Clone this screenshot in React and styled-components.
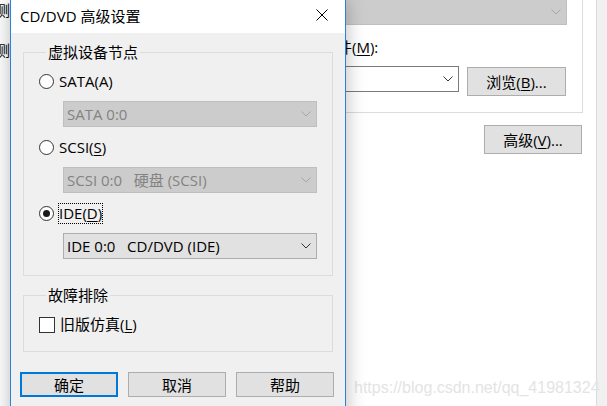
import React from 'react';
import styled, { createGlobalStyle } from 'styled-components';

const font = `"Open Sans", "Noto Sans CJK SC", sans-serif`;

const GlobalStyle = createGlobalStyle`
  html, body {
    margin: 0;
    padding: 0;
    background: #ffffff;
    overflow: hidden;
  }
`;

const Screen = styled.div`
  position: relative;
  width: 607px;
  height: 406px;
  display: flex;
  background: #ffffff;
  overflow: hidden;
  font-family: ${font};
  font-size: 15px;
  color: #000;
`;

const EdgeColumn = styled.div`
  width: 10px;
  flex-shrink: 0;
  display: flex;
  flex-direction: column;
  align-items: flex-end;
  overflow: hidden;
`;

const EdgeText = styled.div`
  line-height: 20px;
  white-space: nowrap;
  margin-top: ${p => p.$gap || 0}px;
`;

const Covered = styled.div`
  width: 335px;
  flex-shrink: 0;
`;

const ParentPane = styled.div`
  flex: 1;
  display: flex;
  flex-direction: column;
`;

const ConnectGroup = styled.div`
  height: 113px;
  box-sizing: border-box;
  margin-right: 13px;
  padding-right: 15px;
  border-right: 1px solid #dcdcdc;
  border-bottom: 1px solid #dcdcdc;
  display: flex;
  flex-direction: column;
`;

const FileLabel = styled.div`
  line-height: 20px;
  margin: 12px 0 0 -23px;
  white-space: nowrap;
`;

const FileRow = styled.div`
  display: flex;
  align-items: flex-start;
  gap: 8px;
  margin-top: 9px;
  margin-left: -10px;
`;

const SideStrip = styled.div`
  width: 10px;
  flex-shrink: 0;
  background: #f0f0f0;
  border-left: 1px solid #dcdcdc;
`;

const Key = styled.span`
  text-decoration: underline;
  text-underline-offset: 2px;
`;

const selectLook = {
  disabled: { bg: '#cccccc', border: '#bfbfbf', color: '#838383', arrow: '#a6a6a6' },
  gray: { bg: '#e1e1e1', border: '#adadad', color: '#000000', arrow: '#333333' },
  white: { bg: '#ffffff', border: '#7a7a7a', color: '#000000', arrow: '#333333' },
};

const SelectBox = styled.div`
  box-sizing: border-box;
  height: 26px;
  display: flex;
  align-items: center;
  justify-content: space-between;
  padding: 0 5px 0 3px;
  background: ${p => selectLook[p.$look].bg};
  border: 1px solid ${p => selectLook[p.$look].border};
  color: ${p => selectLook[p.$look].color};
  white-space: pre;
  line-height: 20px;
  ${p => p.$width ? `width: ${p.$width}px;` : ''}
  ${p => p.$indent ? `margin-left: ${p.$indent}px;` : ''}
  ${p => p.$top !== undefined ? `margin-top: ${p.$top}px;` : ''}
`;

const Chevron = ({ color }) => (
  <svg width="10" height="6" viewBox="0 0 10 6">
    <polyline points="0.5,0.5 5,5 9.5,0.5" fill="none" stroke={color} strokeWidth="1" />
  </svg>
);

const Select = ({ look, children, ...rest }) => (
  <SelectBox $look={look} {...rest}>
    <span>{children}</span>
    <Chevron color={selectLook[look].arrow} />
  </SelectBox>
);

const Button = styled.button`
  box-sizing: border-box;
  width: ${p => p.$w || 98}px;
  height: ${p => p.$h || 25}px;
  padding: 0;
  margin-top: ${p => p.$top || 0}px;
  font-family: ${font};
  font-size: 15px;
  line-height: 20px;
  color: #000;
  background: #e1e1e1;
  border: ${p => p.$primary ? '2px solid #0078d7' : '1px solid #adadad'};
  flex-shrink: 0;
`;

const AdvancedButton = styled(Button)`
  align-self: flex-end;
  margin-right: 14px;
  margin-top: 12px;
`;

const Dialog = styled.div`
  position: absolute;
  left: 10px;
  top: 0;
  width: 336px;
  height: 430px;
  box-sizing: border-box;
  border-left: 1px solid #2a84d6;
  border-right: 1px solid #2a84d6;
  background: #f0f0f0;
  box-shadow: 0 0 18px rgba(0, 0, 0, 0.28);
  display: flex;
  flex-direction: column;
`;

const TitleBar = styled.div`
  height: 33px;
  flex-shrink: 0;
  background: #ffffff;
  display: flex;
  justify-content: space-between;
`;

const Title = styled.div`
  padding: 6px 0 0 9px;
  line-height: 20px;
`;

const Close = styled.div`
  width: 46px;
  display: flex;
  align-items: center;
  justify-content: center;
  padding-bottom: 3px;
`;

const Body = styled.div`
  padding: 9px 12px 0;
  display: flex;
  flex-direction: column;
`;

const Group = styled.fieldset`
  margin: ${p => p.$top || 0}px 0 0;
  padding: 9px 15px 16px;
  border: 1px solid #dcdcdc;
  min-width: 0;
  display: flex;
  flex-direction: column;
`;

const Caption = styled.legend`
  margin-left: 7px;
  padding: 0 2px;
  line-height: 20px;
`;

const OptionRow = styled.div`
  height: 21px;
  display: flex;
  align-items: center;
  gap: 4px;
  margin-top: ${p => p.$top || 0}px;
`;

const RadioCircle = styled.span`
  box-sizing: border-box;
  width: 15px;
  height: 15px;
  border: 1px solid #333;
  border-radius: 50%;
  background: #fff;
  display: grid;
  place-items: center;
  flex-shrink: 0;
  &::after {
    content: '';
    width: 7px;
    height: 7px;
    border-radius: 50%;
    background: ${p => p.$checked ? '#1a1a1a' : 'transparent'};
  }
`;

const CheckSquare = styled.span`
  box-sizing: border-box;
  width: 16px;
  height: 16px;
  border: 1px solid #333;
  background: #fff;
  flex-shrink: 0;
`;

const OptionLabel = styled.span`
  line-height: 19px;
  padding: 0;
  border: 1px ${p => p.$focused ? 'dotted #000' : 'solid transparent'};
  white-space: nowrap;
`;

const ButtonRow = styled.div`
  display: flex;
  gap: 10px;
  margin: 20px 0 0 -3px;
`;

const Watermark = styled.div`
  position: absolute;
  left: 354px;
  top: 379px;
  font-family: "Liberation Sans", Arial, sans-serif;
  font-size: 16px;
  line-height: 18px;
  color: #e4e4e4;
  white-space: nowrap;
`;

export default function App() {
  return (
    <Screen>
      <GlobalStyle />
      <EdgeColumn>
        <EdgeText>检测</EdgeText>
        <EdgeText $gap={20}>检测</EdgeText>
      </EdgeColumn>
      <Covered />
      <ParentPane>
        <ConnectGroup>
          <Select look="disabled" $indent={-10} $top={-1}> </Select>
          <FileLabel>文件(<Key>M</Key>):</FileLabel>
          <FileRow>
            <Select look="white" $width={124}> </Select>
            <Button $w={99} $h={29} $top={1}>浏览(<Key>B</Key>)...</Button>
          </FileRow>
        </ConnectGroup>
        <AdvancedButton $w={98} $h={29}>高级(<Key>V</Key>)...</AdvancedButton>
      </ParentPane>
      <SideStrip />

      <Watermark>https://blog.csdn.net/qq_41981324</Watermark>

      <Dialog>
        <TitleBar>
          <Title>CD/DVD 高级设置</Title>
          <Close>
            <svg width="12" height="12" viewBox="0 0 12 12">
              <path d="M0.5 0.5 L11.5 11.5 M11.5 0.5 L0.5 11.5" stroke="#000" strokeWidth="1" />
            </svg>
          </Close>
        </TitleBar>
        <Body>
          <Group>
            <Caption>虚拟设备节点</Caption>
            <OptionRow>
              <RadioCircle />
              <OptionLabel>SATA(A)</OptionLabel>
            </OptionRow>
            <Select look="disabled" $indent={24} $top={9}>SATA 0:0</Select>
            <OptionRow $top={10}>
              <RadioCircle />
              <OptionLabel>SCSI(<Key>S</Key>)</OptionLabel>
            </OptionRow>
            <Select look="disabled" $indent={24} $top={9}>{'SCSI 0:0   硬盘 (SCSI)'}</Select>
            <OptionRow $top={10}>
              <RadioCircle $checked />
              <OptionLabel $focused>IDE(<Key>D</Key>)</OptionLabel>
            </OptionRow>
            <Select look="gray" $indent={24} $top={9}>{'IDE 0:0   CD/DVD (IDE)'}</Select>
          </Group>
          <Group $top={9}>
            <Caption>故障排除</Caption>
            <OptionRow>
              <CheckSquare />
              <OptionLabel>旧版仿真(<Key>L</Key>)</OptionLabel>
            </OptionRow>
          </Group>
          <ButtonRow>
            <Button $primary>确定</Button>
            <Button>取消</Button>
            <Button>帮助</Button>
          </ButtonRow>
        </Body>
      </Dialog>
    </Screen>
  );
}
